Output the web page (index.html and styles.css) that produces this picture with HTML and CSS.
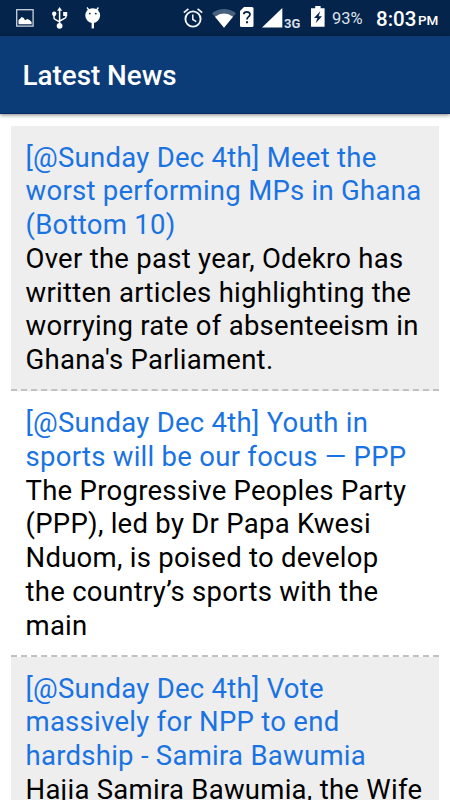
FILE: index.html
```html
<!DOCTYPE html>
<html lang="en">
<head>
  <meta charset="UTF-8" />
  <meta name="viewport" content="width=device-width, initial-scale=1.0"/>
  <title>Latest News</title>
  <link rel="stylesheet" href="styles.css">
</head>
<body>
  <div class="status-bar">
    <div class="status-left">
      <!-- Picture -->
      <svg class="icon-picture" width="18" height="18" viewBox="0 0 18 18">
        <rect x="0.7" y="0.7" width="16.4" height="16.4" fill="none" stroke="#c9d2de" stroke-width="1.3"/>
        <path d="M2.500 15.200V11l1.600-1.200 1.500-1.800 2.200 1 1.200 2.200 2.400-1.200 2.200 1 2 2v2.200z" fill="#fff"/>
      </svg>
      <!-- USB -->
      <svg class="icon-usb" width="16" height="22" viewBox="0 0 16 22">
        <path d="M7.600 18V2.500M2 7.500v3.200q0 1.200 1.500 2l4.100 2.200M14 7v2.600q0 1.200-1.400 1.800l-5 2.600" fill="none" stroke="#fff" stroke-width="1.5"/>
        <path d="M7.600 0l2.500 3.800H5.100zM11.200 5h4v4h-4z" fill="#fff"/>
        <circle cx="2.200" cy="6.800" r="2.200" fill="#fff"/>
        <circle cx="7.600" cy="18.800" r="2.900" fill="#fff"/>
      </svg>
      <!-- Debugging -->
      <svg class="icon-debug" width="16" height="22" viewBox="0 0 16 22">
        <path d="M2 0.500l3 4M13.400 0.500l-3 4" stroke="#fff" stroke-width="1.3"/>
        <circle cx="7.700" cy="8.600" r="7.400" fill="#fff"/>
        <path d="M6.600 15h2.400v6.400H6.600z" fill="#fff"/>
        <circle cx="4.800" cy="6.600" r="0.900" fill="#05244b"/>
        <circle cx="10.800" cy="6.600" r="0.900" fill="#05244b"/>
      </svg>
    </div>

    <div class="status-right">
      <!-- Alarm -->
      <svg class="icon-alarm" width="20" height="20" viewBox="0 0 20 20">
        <circle cx="10" cy="11" r="7.600" fill="none" stroke="#f3f5f8" stroke-width="1.900"/>
        <path d="M0.800 4.700L5.400 0.900M19.200 4.700L14.600 0.900" stroke="#f3f5f8" stroke-width="1.700"/>
        <path d="M9.800 6.400v5.100l3.500 2.200" fill="none" stroke="#f3f5f8" stroke-width="1.500"/>
      </svg>
      <!-- Wifi -->
      <svg class="icon-wifi" width="24" height="19" viewBox="0 0 24 19">
        <path d="M0 4.200Q12-4 24 4.200L12 18.700z" fill="#47617f"/>
        <path d="M3 7.800Q12 1.400 21 7.800L12 18.700z" fill="#fff"/>
      </svg>
      <!-- Unknown SIM -->
      <svg class="icon-sim" width="14" height="20" viewBox="0 0 14 20">
        <path d="M4 0h8q1.500 0 1.500 1.500v17q0 1.500-1.500 1.500H1.500Q0 20 0 18.500V4z" fill="#fff"/>
        <path d="M3.700 7.300Q3.900 4.800 6.900 4.800T10 7.600Q10 8.900 8.200 10.100Q7 11 7 12.600" fill="none" stroke="#05244b" stroke-width="1.700"/>
        <path d="M6 14.300h2v2H6z" fill="#05244b"/>
      </svg>
      <!-- Signal -->
      <svg class="icon-signal" width="21" height="20" viewBox="0 0 21 20">
        <path d="M20.300 0v19.500H0z" fill="#fff"/>
      </svg>
      <span class="network">3G</span>
      <!-- Battery -->
      <svg class="icon-battery" width="14" height="21" viewBox="0 0 14 21">
        <path d="M4.200 0h5.400v2.200h4V20.700H0V2.200h4.200z" fill="#fff"/>
        <path d="M9.300 5.200L3 12.100h3.400l-1.700 5.100 6.300-7H7.600z" fill="#05244b"/>
      </svg>
      <span class="percent">93%</span>
      <span class="clock">8:03</span>
      <span class="period">PM</span>
    </div>
  </div>

  <div class="header">
    <h1>Latest News</h1>
  </div>

  <div class="news-list">
    <div class="news-item shaded">
      <a href="#">[@Sunday Dec 4th] Meet the worst performing MPs in Ghana (Bottom 10)</a>
      <p>Over the past year, Odekro has written articles highlighting the worrying rate of absenteeism in Ghana's Parliament.</p>
    </div>
    <div class="news-item">
      <a href="#">[@Sunday Dec 4th] Youth in sports will be our focus — PPP</a>
      <p>The Progressive Peoples Party (PPP), led by Dr Papa Kwesi Nduom, is poised to develop the country’s sports with the main</p>
    </div>
    <div class="news-item shaded">
      <a href="#">[@Sunday Dec 4th] Vote massively for NPP to end hardship - Samira Bawumia</a>
      <p>Hajia Samira Bawumia, the Wife</p>
    </div>
  </div>
</body>
</html>
```

FILE: styles.css
```css
* { margin: 0; padding: 0; box-sizing: border-box; }
body {
  font-family: Roboto, sans-serif;
  background: #fff; color: #000;
  height: 100vh; overflow: hidden;
  display: flex; flex-direction: column;
}

/* Status bar */
.status-bar {
  display: flex; justify-content: space-between;
  height: 36px; flex-shrink: 0;
  background: #05244b; color: #fff;
}
.status-left, .status-right { display: flex; align-items: flex-start; }
.status-left { padding-left: 16px; }
.status-right { padding-right: 11px; }
.status-bar svg { display: block; flex-shrink: 0; }
.status-bar span { white-space: nowrap; }
.icon-picture { margin-top: 9px; }
.icon-usb { margin: 7px 0 0 18px; }
.icon-debug { margin: 7px 0 0 17px; }
.icon-alarm { margin-top: 8px; }
.icon-wifi { margin: 9px 0 0 9px; }
.icon-sim { margin: 7px 0 0 4px; }
.icon-signal { margin: 8px 0 0 8px; }
.network {
  width: 19px; margin: 16px 0 0 1px;
  font-size: 13px; line-height: 15px; font-weight: 700; color: #d8dfe8;
}
.icon-battery { margin: 6px 0 0 8px; }
.percent {
  width: 31px; margin: 8px 0 0 7px;
  font-size: 16.5px; line-height: 21px; color: #dce2ea;
}
.clock {
  width: 39px; margin: 7px 0 0 13px;
  font-size: 20.5px; line-height: 24px; font-weight: 500;
}
.period {
  width: 21px; margin: 12px 0 0 3px;
  font-size: 13.5px; line-height: 17px; font-weight: 500;
}

/* Title bar */
.header {
  display: flex; align-items: center;
  height: 78px; flex-shrink: 0; padding: 2px 0 0 22.5px;
  background: #0b3c78; color: #fff;
  border-bottom: 1px solid #082d66;
  box-shadow: 0 1px 4px rgba(0, 0, 0, 0.5);
}
.header h1 { font-size: 27.8px; font-weight: 500; }

/* News */
.news-list { padding: 11.8px 11px 0; }
.news-item {
  padding: 14.8px 15px 12.45px 14.5px;
  border-bottom: 2px dashed #c1c1c1;
  font-size: 27.5px; line-height: 33.75px; letter-spacing: 0.27px;
}
.news-item a { display: block; color: #1a73e2; text-decoration: none; }
.shaded { background: #eee; }
```
